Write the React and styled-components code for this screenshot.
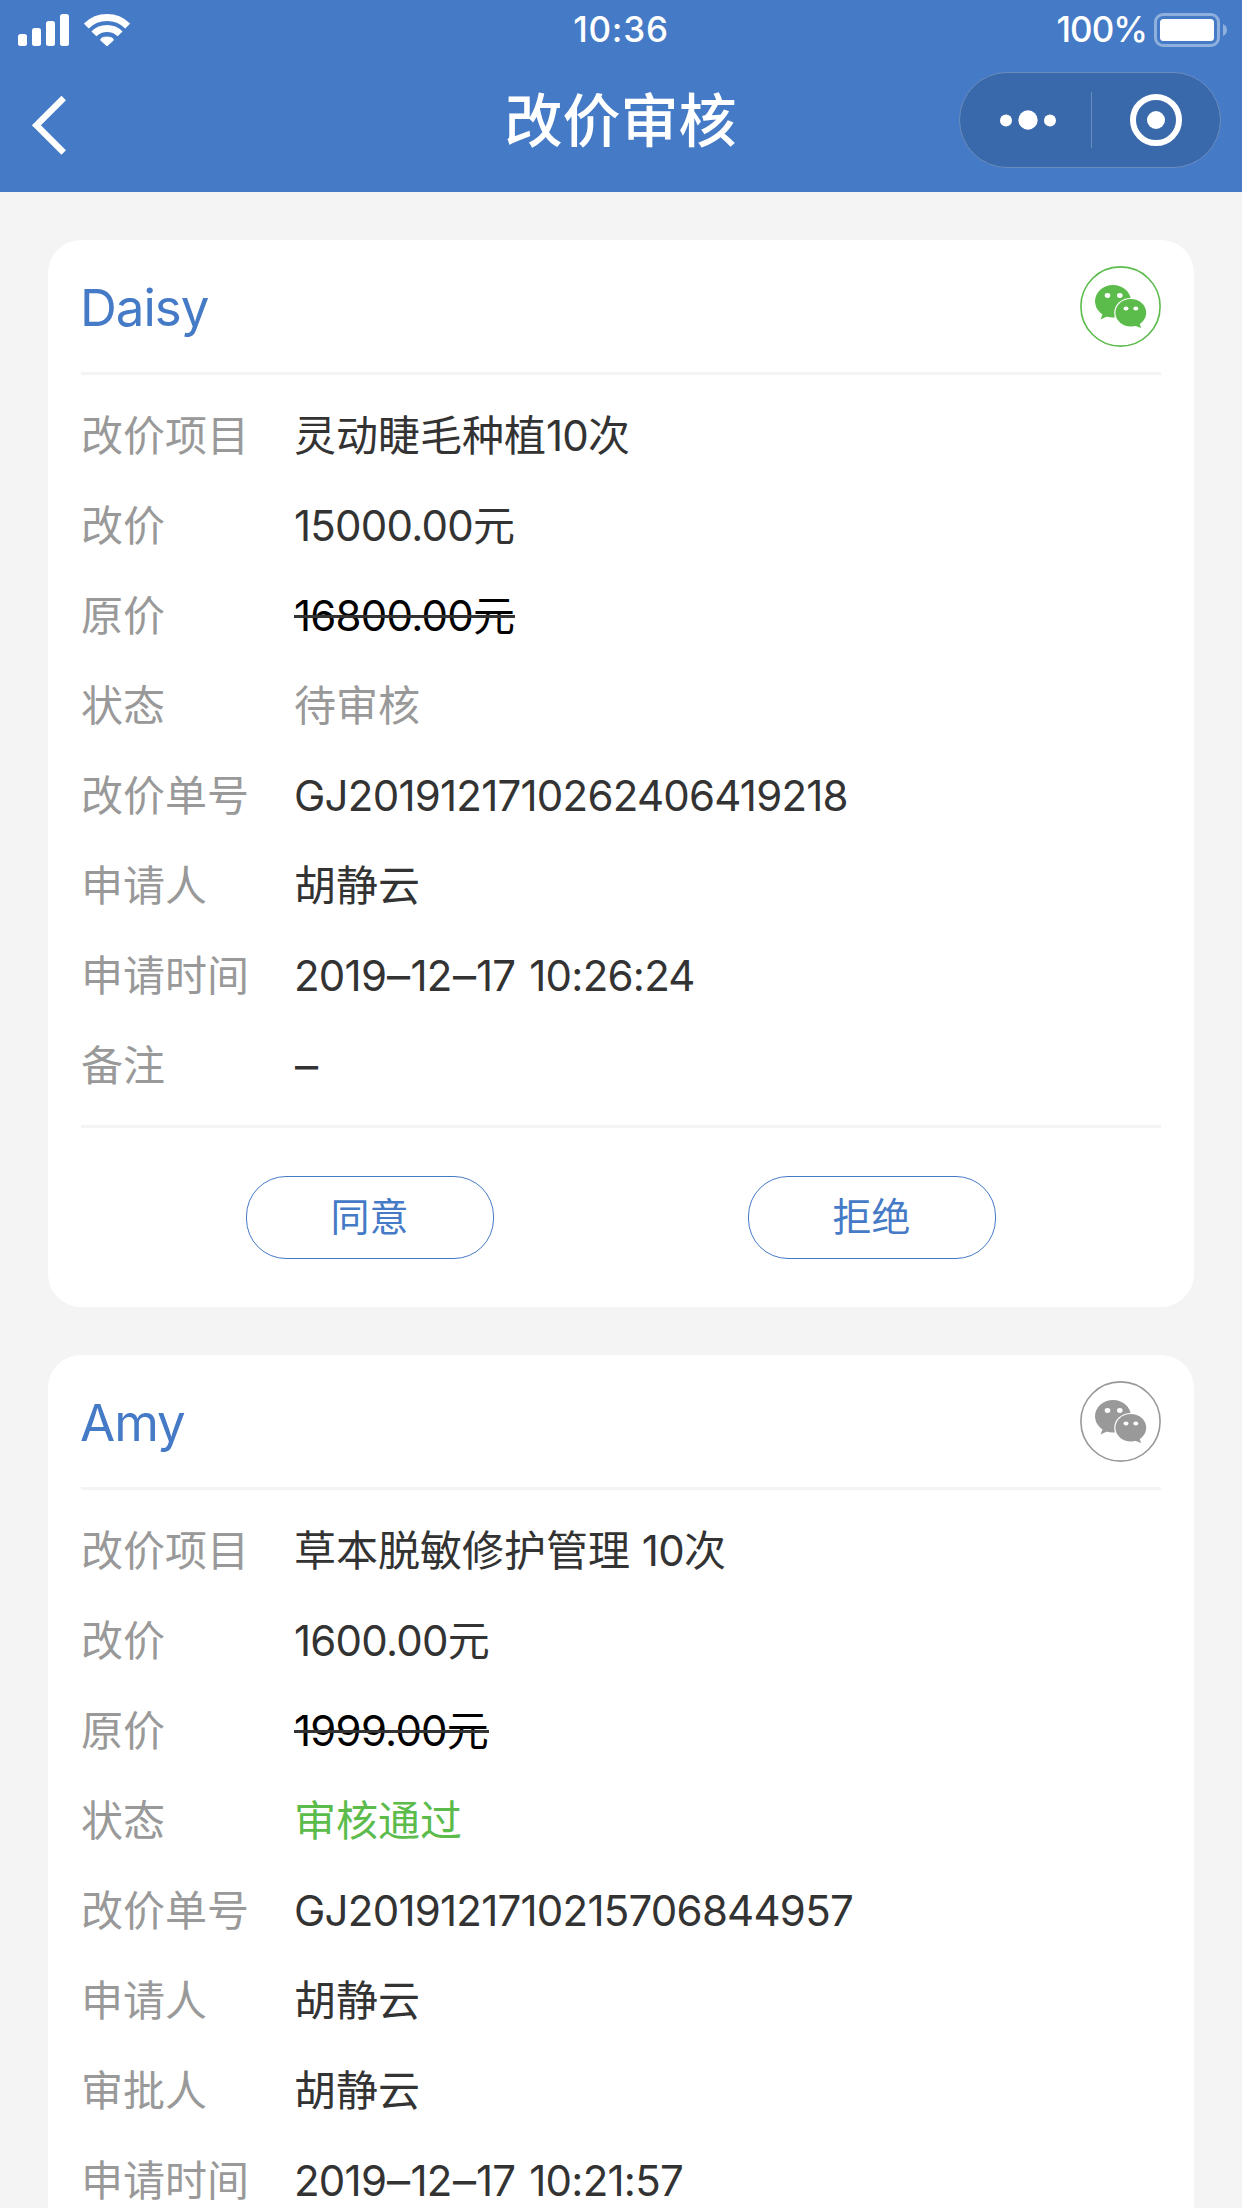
import React from 'react';
import styled, { createGlobalStyle } from 'styled-components';

const GlobalStyle = createGlobalStyle`
  * {
    box-sizing: border-box;
  }

  body {
    margin: 0;
    background-color: #f4f4f4;
    font-family: Inter, 'Noto Sans CJK SC', sans-serif;
    color: #333;
  }
`;

const Page = styled.div`
  height: 2208px;
  overflow: hidden;
  background-color: #f4f4f4;
`;

const Header = styled.header`
  height: 192px;
  background-color: #457ac6;
  color: #fff;
`;

const StatusBar = styled.div`
  display: grid;
  grid-template-columns: 1fr auto 1fr;
  align-items: center;
  height: 60px;
  padding: 0 14px 0 18px;
`;

const StatusText = styled.span`
  padding: 0 ${props => props.$shift || '0'} 2px 0;
  font-size: 35px;
  font-weight: 500;
  line-height: 58px;
  letter-spacing: ${props => props.$spacing || '0'};
`;

const StatusLeft = styled.div`
  display: flex;
  align-items: center;
  gap: 15px;
`;

const StatusRight = styled.div`
  display: flex;
  align-items: center;
  justify-content: flex-end;
  gap: 7px;
`;

const NavBar = styled.div`
  display: grid;
  grid-template-columns: 1fr auto 1fr;
  align-items: center;
  height: 120px;
  padding: 0 21px;
`;

const BackButton = styled.button`
  display: flex;
  margin: 10px 0 0 9px;
  padding: 0;
  border: none;
  background: none;
  justify-self: start;
`;

const Title = styled.h1`
  margin: 0;
  padding: 2px 1px 0 0;
  font-size: 58px;
  font-weight: 500;
  line-height: 118px;
`;

const Capsule = styled.div`
  display: flex;
  align-items: center;
  justify-self: end;
  width: 262px;
  height: 96px;
  border: 1px solid #6a8dc0;
  border-radius: 48px;
  background-color: #3969aa;
`;

const CapsuleItem = styled.div`
  display: flex;
  flex: 1;
  align-items: center;
  justify-content: center;
  padding-left: 3px;

  & + & {
    height: 56px;
    padding-left: 0;
    border-left: 1px solid #6a8dc0;
  }
`;

const List = styled.main`
  display: flex;
  flex-direction: column;
  gap: 48px;
  padding: 48px;
`;

const Card = styled.section`
  padding: 0 33px;
  border-radius: 33px;
  background-color: #fff;
`;

const CardHeader = styled.div`
  display: flex;
  align-items: center;
  justify-content: space-between;
  height: 135px;
  border-bottom: 3px solid #f4f4f4;
`;

const CardTitle = styled.h2`
  margin: 0 0 0 -1px;
  padding-top: 4px;
  color: #457ac6;
  font-size: 51px;
  font-weight: 400;
  line-height: 72px;
  letter-spacing: -1px;
`;

const Fields = styled.dl`
  margin: 0;
  padding: 16px 0 14px;
`;

const Field = styled.div`
  display: flex;
  align-items: center;
  height: 90px;
  font-size: 42px;
  line-height: 90px;
  white-space: nowrap;
`;

const Label = styled.dt`
  width: 213px;
  color: #999;
`;

const Value = styled.dd`
  position: relative;
  margin: 0;
  color: ${props => props.$color || '#333'};
`;

const OldPrice = styled(Value)`
  color: #000;

  &::after {
    content: '';
    position: absolute;
    top: 44px;
    left: 0;
    right: 0;
    height: 3px;
    background-color: #333;
  }
`;

// Latin runs are set a little tighter than the Chinese text around them
const Latin = styled.span`
  letter-spacing: -0.76px;
  word-spacing: 3px;
`;

const Dash = styled.span`
  display: inline-block;
  padding: 0 2px;
  transform: scaleX(1.1);
`;

const Actions = styled.div`
  display: flex;
  justify-content: center;
  gap: 254px;
  padding: 48px 0;
  border-top: 3px solid #f4f4f4;
`;

const ActionButton = styled.button`
  width: 248px;
  height: 83px;
  padding: 0 1px 8px 0;
  border: 1px solid #457ac6;
  border-radius: 40px;
  background-color: #fff;
  color: #457ac6;
  font-family: inherit;
  font-size: 39px;
`;

function SignalIcon() {
  return (
    <svg width="51" height="34" viewBox="0 0 51 34" fill="#fff">
      <rect x="0" y="21" width="9" height="12" rx="2.5" />
      <rect x="14" y="15" width="9" height="18" rx="2.5" />
      <rect x="28" y="8" width="9" height="25" rx="2.5" />
      <rect x="42" y="1" width="9" height="32" rx="2.5" />
    </svg>
  );
}

function WifiIcon() {
  return (
    <svg width="46" height="34" viewBox="0 0 46 34" fill="none" stroke="#fff" strokeWidth="7">
      <path d="M2.3 13.1A29.5 29.5 0 0 1 43.7 13.1" />
      <path d="M9.9 20.9A18.5 18.5 0 0 1 36.1 20.9" />
      <path d="M23 33L16.6 27.2Q16.6 24 23 24Q29.4 24 29.4 27.2Z" fill="#fff" stroke="#fff" strokeWidth="0.8" strokeLinejoin="round" />
    </svg>
  );
}

function BatteryIcon() {
  return (
    <svg width="74" height="34" viewBox="0 0 74 34">
      <rect x="1.5" y="1.5" width="63" height="31" rx="7.5" fill="none" stroke="#fff" strokeOpacity="0.4" strokeWidth="3" />
      <rect x="6" y="6" width="54" height="22" rx="3.5" fill="#fff" />
      <path d="M69 11Q73 13 73 17Q73 21 69 23Z" fill="#fff" fillOpacity="0.4" />
    </svg>
  );
}

function BackIcon() {
  return (
    <svg width="38" height="60" viewBox="0 0 38 60">
      <path d="M33.7 3L6.4 30.3L33.7 57.6" fill="none" stroke="#fff" strokeWidth="6.4" />
    </svg>
  );
}

function MoreIcon() {
  return (
    <svg width="58" height="20" viewBox="0 0 58 20" fill="#fff">
      <circle cx="8" cy="10.5" r="6" />
      <circle cx="30" cy="10" r="9.7" />
      <circle cx="52" cy="10.5" r="6" />
    </svg>
  );
}

function TargetIcon() {
  return (
    <svg width="52" height="52" viewBox="0 0 52 52">
      <circle cx="26" cy="26" r="23" fill="none" stroke="#fff" strokeWidth="6" />
      <circle cx="26" cy="26" r="9" fill="#fff" />
    </svg>
  );
}

function WechatIcon({ color }) {
  return (
    <svg width="81" height="81" viewBox="0 0 81 81">
      <circle cx="40.5" cy="40.5" r="39.6" fill="none" stroke={color} strokeWidth="1.6" />
      <g fill={color}>
        <ellipse cx="33" cy="35.3" rx="18" ry="16.2" />
        <path d="M23 47L20.6 53.6L29 49.5Z" />
      </g>
      <ellipse cx="50.8" cy="46.8" rx="16.6" ry="14.9" fill="#fff" />
      <g fill={color}>
        <ellipse cx="50.8" cy="46.8" rx="15.4" ry="13.7" />
        <path d="M59 56L61.2 62L53 59Z" />
      </g>
      <g fill="#fff">
        <ellipse cx="27.5" cy="29.5" rx="2.8" ry="2.4" />
        <ellipse cx="39.8" cy="29.5" rx="2.8" ry="2.4" />
        <ellipse cx="46" cy="42.5" rx="2.5" ry="2.1" />
        <ellipse cx="55.8" cy="42.5" rx="2.5" ry="2.1" />
      </g>
    </svg>
  );
}

function Row({ label, color, children }) {
  return (
    <Field>
      <Label>{label}</Label>
      <Value $color={color}>{children}</Value>
    </Field>
  );
}

function App() {
  return (
    <Page>
      <GlobalStyle />
      <Header>
        <StatusBar>
          <StatusLeft>
            <SignalIcon />
            <WifiIcon />
          </StatusLeft>
          <StatusText $spacing="0.8px" $shift="4px">10:36</StatusText>
          <StatusRight>
            <StatusText $spacing="-1px">100%</StatusText>
            <BatteryIcon />
          </StatusRight>
        </StatusBar>
        <NavBar>
          <BackButton>
            <BackIcon />
          </BackButton>
          <Title>改价审核</Title>
          <Capsule>
            <CapsuleItem>
              <MoreIcon />
            </CapsuleItem>
            <CapsuleItem>
              <TargetIcon />
            </CapsuleItem>
          </Capsule>
        </NavBar>
      </Header>
      <List>
        <Card>
          <CardHeader>
            <CardTitle>Daisy</CardTitle>
            <WechatIcon color="#5bbb4b" />
          </CardHeader>
          <Fields>
            <Row label="改价项目">灵动睫毛种植<Latin>10</Latin>次</Row>
            <Row label="改价"><Latin>15000.00</Latin>元</Row>
            <Field>
              <Label>原价</Label>
              <OldPrice><Latin>16800.00</Latin>元</OldPrice>
            </Field>
            <Row label="状态" color="#999">待审核</Row>
            <Row label="改价单号"><Latin>GJ2019121710262406419218</Latin></Row>
            <Row label="申请人">胡静云</Row>
            <Row label="申请时间"><Latin>2019<Dash>–</Dash>12<Dash>–</Dash>17 10:26:24</Latin></Row>
            <Row label="备注"><Dash>–</Dash></Row>
          </Fields>
          <Actions>
            <ActionButton>同意</ActionButton>
            <ActionButton>拒绝</ActionButton>
          </Actions>
        </Card>
        <Card>
          <CardHeader>
            <CardTitle>Amy</CardTitle>
            <WechatIcon color="#999" />
          </CardHeader>
          <Fields>
            <Row label="改价项目">草本脱敏修护管理 <Latin>10</Latin>次</Row>
            <Row label="改价"><Latin>1600.00</Latin>元</Row>
            <Field>
              <Label>原价</Label>
              <OldPrice><Latin>1999.00</Latin>元</OldPrice>
            </Field>
            <Row label="状态" color="#5bbb4b">审核通过</Row>
            <Row label="改价单号"><Latin>GJ2019121710215706844957</Latin></Row>
            <Row label="申请人">胡静云</Row>
            <Row label="审批人">胡静云</Row>
            <Row label="申请时间"><Latin>2019<Dash>–</Dash>12<Dash>–</Dash>17 10:21:57</Latin></Row>
          </Fields>
        </Card>
      </List>
    </Page>
  );
}

export default App;
